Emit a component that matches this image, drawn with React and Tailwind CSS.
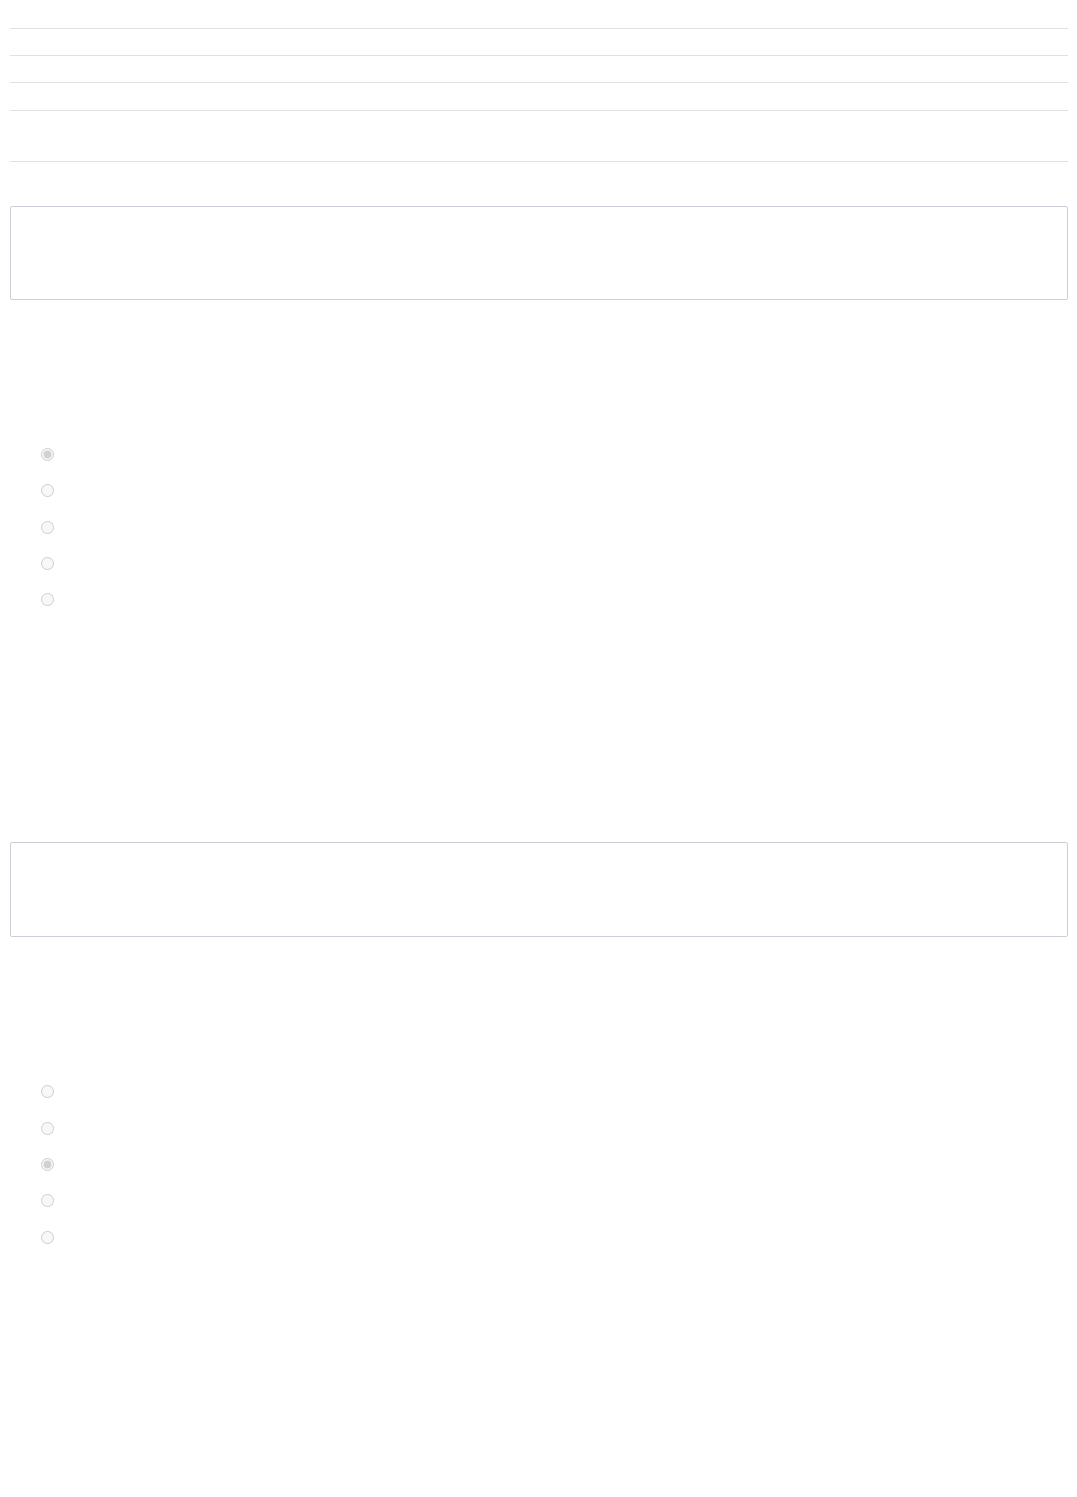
import React from 'react';

const RadioGroup = ({ name, checked }) => (
  <div className="flex flex-col">
    {[0, 1, 2, 3, 4].map(i => (
      <div key={i} className="h-[36.3px] flex items-start pl-[31px]">
        <input
          type="radio"
          name={name}
          disabled
          defaultChecked={i === checked}
          className="m-0 w-[13px] h-[13px]"
        />
      </div>
    ))}
  </div>
);

const Question = ({ name, checked, tall }) => (
  <div>
    <div className={`${tall ? 'h-[95px]' : 'h-[94px]'} border border-[#cbd0d8] rounded-[2px] bg-white`} />
    <div className="h-[148px]" />
    <RadioGroup name={name} checked={checked} />
  </div>
);

export default function App() {
  return (
    <div className="min-h-[1497px] bg-white pl-[10px] pr-[9px] font-['Liberation_Sans',sans-serif]">
      <div className="h-[28px]" />
      <div className="border-t border-[#e1e1e4] h-[27px]" />
      <div className="border-t border-[#e1e1e4] h-[27px]" />
      <div className="border-t border-[#e1e1e4] h-[28px]" />
      <div className="border-t border-[#e1e1e4] h-[51px]" />
      <div className="border-t border-[#e1e1e4] h-[45px]" />
      <Question name="q1" checked={0} />
      <div className="h-[213px]" />
      <Question name="q2" checked={2} tall />
    </div>
  );
}
